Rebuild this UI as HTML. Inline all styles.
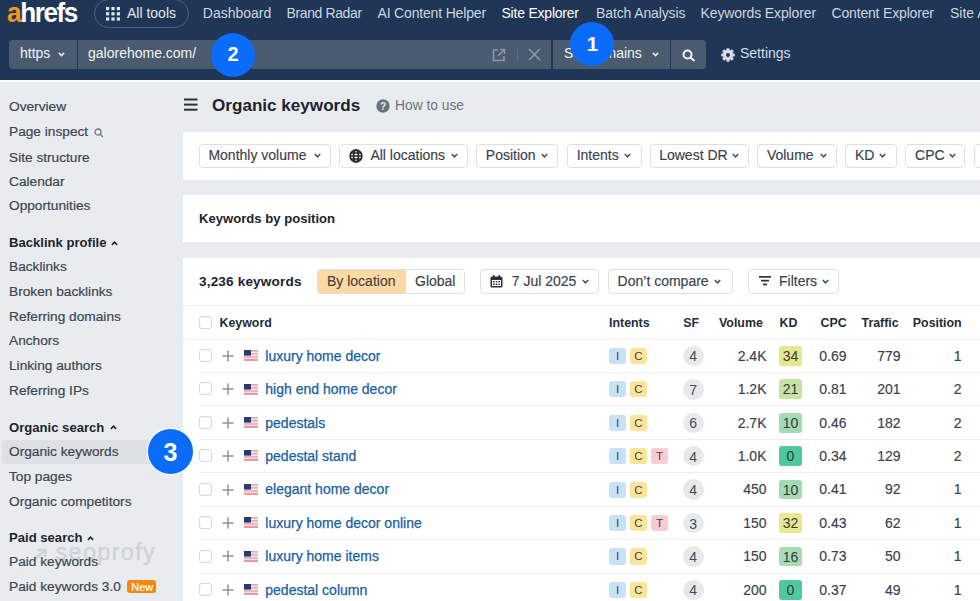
<!DOCTYPE html>
<html><head><meta charset="utf-8">
<style>
*{margin:0;padding:0;box-sizing:border-box}
html,body{width:980px;height:601px;overflow:hidden;background:#e9ecef;font-family:"Liberation Sans",sans-serif;position:relative}
.a{position:absolute;line-height:1;white-space:nowrap}
#hdr{position:absolute;left:-10px;top:-10px;width:1000px;height:90px;background:#1f3657}
#hline{position:absolute;left:-10px;top:80px;width:1000px;height:2px;background:#fbfcfd}
.nav{font-size:14px;color:#cdd5df;top:6px}
.inp{position:absolute;background:#4a5a6f}
.sb{font-size:13.7px;color:#3d4550;left:9px;margin-top:0.8px;-webkit-text-stroke:0.2px #3d4550}
.sbh{font-size:13.1px;color:#1e242b;font-weight:bold;left:9px;margin-top:0.6px}
.panel{position:absolute;background:#fff;left:183px;width:817px}
.btn{position:absolute;border:1px solid #dcdfe4;border-radius:4px;background:#fff;height:24px}
.bt{font-size:14px;color:#3a414b;-webkit-text-stroke:0.15px #3a414b}
.chev{position:absolute;width:5px;height:5px;border-right:1.5px solid #444b55;border-bottom:1.5px solid #444b55;transform:rotate(45deg)}
.th{font-size:12.4px;font-weight:bold;color:#262c35;top:316px;margin-top:0.6px}
.circ{position:absolute;border-radius:50%;background:#0b6cf9;color:#fff;font-weight:bold;text-align:center}
.cv{position:absolute}
.pl{position:absolute}
.cb{position:absolute;width:13px;height:13px;border:1px solid #d3d7dc;border-radius:3px;background:#fff}
.kw{font-size:14px;color:#17609f;-webkit-text-stroke:0.25px #17609f}
.num{font-size:14px;color:#3a414b;-webkit-text-stroke:0.15px #3a414b}
.bd{position:absolute;width:17px;height:16.3px;border-radius:3px;font-size:11.5px;line-height:16.3px;text-align:center;color:#3c434d}
.sf{position:absolute;width:21px;height:20.5px;border-radius:50%;background:#e8e9eb;font-size:14px;line-height:20.5px;padding-top:0.8px;text-align:center;color:#454b53}
.kd{position:absolute;width:23px;height:19.7px;border-radius:3px;font-size:14px;line-height:19.7px;padding-top:1px;text-align:center;color:#333a40}
#wrap{position:absolute;left:0;top:0;width:980px;height:601px}
</style></head><body><div id="wrap">
<div id="hdr"></div>
<div id="hline"></div>

<!-- logo -->
<div class="a" style="left:7px;top:0px;font-size:27px;font-weight:bold;color:#fff;letter-spacing:-1.5px;transform:scaleX(0.97);transform-origin:0 0"><span style="color:#f7941d">a</span>hrefs</div>

<!-- all tools pill -->
<div style="position:absolute;left:93.6px;top:-1px;width:95.6px;height:28.5px;border:1.6px solid #4f6482;border-radius:14.5px"></div>
<svg style="position:absolute;left:106px;top:6.6px" width="14" height="14" viewBox="0 0 14 14" fill="#dfe5ec">
<rect x="0" y="0" width="3.2" height="3.2"/><rect x="5.4" y="0" width="3.2" height="3.2"/><rect x="10.8" y="0" width="3.2" height="3.2"/>
<rect x="0" y="5.2" width="3.2" height="3.2"/><rect x="5.4" y="5.2" width="3.2" height="3.2"/><rect x="10.8" y="5.2" width="3.2" height="3.2"/>
<rect x="0" y="10.4" width="3.2" height="3.2"/><rect x="5.4" y="10.4" width="3.2" height="3.2"/><rect x="10.8" y="10.4" width="3.2" height="3.2"/>
</svg>
<div class="a nav" style="left:127px;color:#e3e8ee">All tools</div>

<div class="a nav" style="left:202.8px">Dashboard</div>
<div class="a nav" style="left:286.5px;letter-spacing:-0.38px">Brand Radar</div>
<div class="a nav" style="left:377.5px;letter-spacing:-0.17px">AI Content Helper</div>
<div class="a nav" style="left:501.5px;color:#fff;letter-spacing:-0.22px">Site Explorer</div>
<div class="a nav" style="left:596px;letter-spacing:-0.12px">Batch Analysis</div>
<div class="a nav" style="left:700.5px;letter-spacing:-0.12px">Keywords Explorer</div>
<div class="a nav" style="left:831.5px;letter-spacing:-0.17px">Content Explorer</div>
<div class="a nav" style="left:950px">Site Audit</div>

<!-- input row -->
<div class="inp" style="left:9px;top:40px;width:68px;height:29px;border-radius:4px 0 0 4px"></div>
<div class="inp" style="left:78px;top:40px;width:473px;height:29px"></div>
<div class="inp" style="left:553px;top:40px;width:117px;height:29px"></div>
<div class="inp" style="left:671px;top:40px;width:35px;height:29px;border-radius:0 4px 4px 0"></div>
<div class="a" style="left:20px;top:46px;font-size:14px;color:#f2f4f7">https</div>
<svg class="cv" style="left:57.8px;top:52px" width="7" height="5" viewBox="0 0 7 5"><path d="M0.9 0.9L3.5 3.6L6.1 0.9" fill="none" stroke="#e3e8ee" stroke-width="1.6"/></svg>
<div class="a" style="left:88px;top:46px;font-size:14px;color:#f2f4f7">galorehome.com/</div>
<svg style="position:absolute;left:492px;top:48px" width="14" height="14" viewBox="0 0 14 14" fill="none" stroke="#8a98aa" stroke-width="1.6">
<path d="M6 2H1.5v10.5H12V8"/><path d="M8 1.5h4.5V6M12.5 1.5L6 8"/></svg>
<div style="position:absolute;left:516.5px;top:49px;width:1px;height:12px;background:#5e6d81"></div>
<svg style="position:absolute;left:528px;top:48px" width="13" height="13" viewBox="0 0 13 13" stroke="#8a98aa" stroke-width="1.6"><path d="M1 1L12 12M12 1L1 12"/></svg>
<div class="a" style="left:564px;top:46px;font-size:14px;color:#f2f4f7">Subdomains</div>
<svg class="cv" style="left:651.5px;top:52.2px" width="7" height="5" viewBox="0 0 7 5"><path d="M0.9 0.9L3.5 3.6L6.1 0.9" fill="none" stroke="#e3e8ee" stroke-width="1.6"/></svg>
<svg style="position:absolute;left:682px;top:49px" width="14" height="13" viewBox="0 0 14 13" fill="none" stroke="#f2f4f7" stroke-width="2"><circle cx="5.5" cy="5.5" r="4"/><path d="M8.5 8.5L12.5 12"/></svg>
<svg style="position:absolute;left:720.5px;top:47.8px" width="14" height="14" viewBox="0 0 14 14"><g fill="#d6dde6"><circle cx="7" cy="7" r="4.9"/><rect x="5.4" y="0.2" width="3.2" height="13.6" rx="0.8"/><rect x="5.4" y="0.2" width="3.2" height="13.6" rx="0.8" transform="rotate(45 7 7)"/><rect x="5.4" y="0.2" width="3.2" height="13.6" rx="0.8" transform="rotate(90 7 7)"/><rect x="5.4" y="0.2" width="3.2" height="13.6" rx="0.8" transform="rotate(135 7 7)"/></g><circle cx="7" cy="7" r="2" fill="#1f3657"/></svg>
<div class="a" style="left:740px;top:46px;font-size:14px;color:#d6dde6">Settings</div>

<!-- SIDEBAR -->
<div style="position:absolute;left:1.5px;top:440px;width:176px;height:24px;background:#dde1e6;border-radius:4px"></div>
<div class="a sb" style="top:99.7px">Overview</div>
<div class="a sb" style="top:124.7px">Page inspect</div>
<svg style="position:absolute;left:94px;top:128px" width="10" height="10" viewBox="0 0 10 10" fill="none" stroke="#6f7782" stroke-width="1.3"><circle cx="4" cy="4" r="3"/><path d="M6.2 6.2L9 9"/></svg>
<div class="a sb" style="top:150px">Site structure</div>
<div class="a sb" style="top:173.9px">Calendar</div>
<div class="a sb" style="top:198.4px">Opportunities</div>
<div class="a sbh" style="top:235.4px">Backlink profile</div>
<svg class="cv" style="left:111px;top:240.5px" width="7" height="5" viewBox="0 0 7 5"><path d="M0.9 3.9L3.5 1.2L6.1 3.9" fill="none" stroke="#1e242b" stroke-width="1.6"/></svg>
<div class="a sb" style="top:259.7px">Backlinks</div>
<div class="a sb" style="top:284.5px">Broken backlinks</div>
<div class="a sb" style="top:309.7px">Referring domains</div>
<div class="a sb" style="top:333.7px">Anchors</div>
<div class="a sb" style="top:357.9px">Linking authors</div>
<div class="a sb" style="top:383.2px">Referring IPs</div>
<div class="a sbh" style="top:420px">Organic search</div>
<svg class="cv" style="left:109.8px;top:425.2px" width="7" height="5" viewBox="0 0 7 5"><path d="M0.9 3.9L3.5 1.2L6.1 3.9" fill="none" stroke="#1e242b" stroke-width="1.6"/></svg>
<div class="a sb" style="top:444.4px">Organic keywords</div>
<div class="a sb" style="top:469.4px">Top pages</div>
<div class="a sb" style="top:493.8px">Organic competitors</div>
<div class="a sbh" style="top:530.4px">Paid search</div>
<svg class="cv" style="left:87.3px;top:535.5px" width="7" height="5" viewBox="0 0 7 5"><path d="M0.9 3.9L3.5 1.2L6.1 3.9" fill="none" stroke="#1e242b" stroke-width="1.6"/></svg>
<svg style="position:absolute;left:33px;top:548px" width="15" height="12" viewBox="0 0 15 12" fill="none" stroke="rgba(150,156,166,0.3)" stroke-width="2.8"><path d="M1.5 11L11 3.5M4 2.2h8.3V9"/></svg><div class="a" style="left:55.5px;top:541.2px;font-size:23.5px;letter-spacing:1.3px;color:rgba(150,156,166,0.26);-webkit-text-stroke:0.7px rgba(150,156,166,0.26)">seoprofy</div>
<div class="a sb" style="top:554.4px">Paid keywords</div>
<div class="a sb" style="top:578.9px">Paid keywords 3.0</div>
<div style="position:absolute;left:127px;top:580px;width:29px;height:13.4px;background:#f5870f;border-radius:3px"></div>
<div class="a" style="left:131.3px;top:581.6px;font-size:11px;color:#fff;-webkit-text-stroke:0.2px #fff">New</div>

<!-- MAIN -->
<svg style="position:absolute;left:183.5px;top:98px" width="14" height="13" viewBox="0 0 14 13" fill="#2b313a"><rect x="0" y="0.5" width="13.5" height="2"/><rect x="0" y="5.6" width="13.5" height="2"/><rect x="0" y="10.7" width="13.5" height="2"/></svg>
<div class="a" style="left:212px;top:97.1px;font-size:17.1px;font-weight:bold;color:#1e242b">Organic keywords</div>
<svg style="position:absolute;left:375.5px;top:98.5px" width="14" height="14" viewBox="0 0 14 14"><circle cx="7" cy="7" r="6.7" fill="#6a727d"/><text x="7" y="10.6" font-family="Liberation Sans" font-weight="bold" font-size="10" fill="#e9ecef" text-anchor="middle">?</text></svg>
<div class="a" style="left:395px;top:98.7px;font-size:13.8px;color:#6b737e">How to use</div>

<!-- panel 1 -->
<div class="panel" style="top:132px;height:48px"></div>
<!-- filter buttons -->
<div class="btn" style="left:199px;top:144px;width:132.0px;height:24px"></div>
<div class="a bt" style="left:208.4px;top:147.9px">Monthly volume</div>
<svg class="cv" style="left:314.4px;top:153.4px" width="7" height="5" viewBox="0 0 7 5"><path d="M0.8 0.9L3.5 3.8L6.2 0.9" fill="none" stroke="#474e58" stroke-width="1.5"/></svg>
<div class="btn" style="left:339.4px;top:144px;width:128.6px;height:24px"></div>
<div class="a bt" style="left:370.4px;top:147.9px">All locations</div>
<svg class="cv" style="left:450.7px;top:153.4px" width="7" height="5" viewBox="0 0 7 5"><path d="M0.8 0.9L3.5 3.8L6.2 0.9" fill="none" stroke="#474e58" stroke-width="1.5"/></svg>
<div class="btn" style="left:475.8px;top:144px;width:82.5px;height:24px"></div>
<div class="a bt" style="left:485.8px;top:147.9px">Position</div>
<svg class="cv" style="left:541.1px;top:153.4px" width="7" height="5" viewBox="0 0 7 5"><path d="M0.8 0.9L3.5 3.8L6.2 0.9" fill="none" stroke="#474e58" stroke-width="1.5"/></svg>
<div class="btn" style="left:566.7px;top:144px;width:75.3px;height:24px"></div>
<div class="a bt" style="left:576.7px;top:147.9px">Intents</div>
<svg class="cv" style="left:624.3px;top:153.4px" width="7" height="5" viewBox="0 0 7 5"><path d="M0.8 0.9L3.5 3.8L6.2 0.9" fill="none" stroke="#474e58" stroke-width="1.5"/></svg>
<div class="btn" style="left:649.7px;top:144px;width:99.6px;height:24px"></div>
<div class="a bt" style="left:659.2px;top:147.9px">Lowest DR</div>
<svg class="cv" style="left:731.7px;top:153.4px" width="7" height="5" viewBox="0 0 7 5"><path d="M0.8 0.9L3.5 3.8L6.2 0.9" fill="none" stroke="#474e58" stroke-width="1.5"/></svg>
<div class="btn" style="left:757.3px;top:144px;width:79.7px;height:24px"></div>
<div class="a bt" style="left:766.9px;top:147.9px">Volume</div>
<svg class="cv" style="left:819.7px;top:153.4px" width="7" height="5" viewBox="0 0 7 5"><path d="M0.8 0.9L3.5 3.8L6.2 0.9" fill="none" stroke="#474e58" stroke-width="1.5"/></svg>
<div class="btn" style="left:845.4px;top:144px;width:51.4px;height:24px"></div>
<div class="a bt" style="left:855.0px;top:147.9px">KD</div>
<svg class="cv" style="left:879.1px;top:153.4px" width="7" height="5" viewBox="0 0 7 5"><path d="M0.8 0.9L3.5 3.8L6.2 0.9" fill="none" stroke="#474e58" stroke-width="1.5"/></svg>
<div class="btn" style="left:905.4px;top:144px;width:60.1px;height:24px"></div>
<div class="a bt" style="left:915.1px;top:147.9px">CPC</div>
<svg class="cv" style="left:948.5px;top:153.4px" width="7" height="5" viewBox="0 0 7 5"><path d="M0.8 0.9L3.5 3.8L6.2 0.9" fill="none" stroke="#474e58" stroke-width="1.5"/></svg>
<div class="btn" style="left:973.8px;top:144px;width:86.2px;height:24px"></div>
<div class="a bt" style="left:984.2px;top:147.9px">Traffic</div>
<svg class="cv" style="left:1039.7px;top:153.4px" width="7" height="5" viewBox="0 0 7 5"><path d="M0.8 0.9L3.5 3.8L6.2 0.9" fill="none" stroke="#474e58" stroke-width="1.5"/></svg>
<svg style="position:absolute;left:349px;top:149.3px" width="14" height="14" viewBox="0 0 14 14" fill="none" stroke="#23282f" stroke-width="1.7"><circle cx="7" cy="7" r="5.9"/><ellipse cx="7" cy="7" rx="2.4" ry="5.9"/><path d="M1.2 7h11.6M1.8 4h10.4M1.8 10h10.4"/></svg>
<div class="panel" style="top:195.4px;height:47px"></div>
<div class="a" style="left:199px;top:211.8px;font-size:13.1px;font-weight:bold;color:#1e242b">Keywords by position</div>
<div class="panel" style="top:258px;height:343px"></div>
<div class="a" style="left:199px;top:274.5px;font-size:13.6px;font-weight:bold;color:#1e242b;letter-spacing:0.15px">3,236 keywords</div>
<div class="btn" style="left:317px;top:268.8px;width:147.7px;height:25px;overflow:hidden"><div style="position:absolute;left:0;top:0;width:88px;height:23px;background:#fdd9a6"></div></div>
<div class="a bt" style="left:327px;top:274.2px;color:#4a4136;-webkit-text-stroke:0.15px #4a4136">By location</div>
<div class="a bt" style="left:415px;top:274.2px">Global</div>
<div class="btn" style="left:480px;top:268.8px;width:119.3px;height:25px"></div>
<svg style="position:absolute;left:490px;top:274.5px" width="13" height="13" viewBox="0 0 13 13"><rect x="0.5" y="1.5" width="12" height="11" rx="1.5" fill="#2b313a"/><rect x="2" y="5" width="9" height="6" fill="#fff"/><g fill="#2b313a"><rect x="3" y="6" width="1.6" height="1.4"/><rect x="5.7" y="6" width="1.6" height="1.4"/><rect x="8.4" y="6" width="1.6" height="1.4"/><rect x="3" y="8.6" width="1.6" height="1.4"/><rect x="5.7" y="8.6" width="1.6" height="1.4"/><rect x="8.4" y="8.6" width="1.6" height="1.4"/></g><rect x="3" y="0" width="1.5" height="3" fill="#2b313a"/><rect x="8.5" y="0" width="1.5" height="3" fill="#2b313a"/></svg>
<div class="a bt" style="left:511.8px;top:274.2px">7 Jul 2025</div>
<svg class="cv" style="left:582.3px;top:278.5px" width="7" height="5" viewBox="0 0 7 5"><path d="M0.8 0.9L3.5 3.8L6.2 0.9" fill="none" stroke="#474e58" stroke-width="1.5"/></svg>
<div class="btn" style="left:608px;top:268.8px;width:124.6px;height:25px"></div>
<div class="a bt" style="left:617.6px;top:274.2px">Don’t compare</div>
<svg class="cv" style="left:714.4px;top:278.5px" width="7" height="5" viewBox="0 0 7 5"><path d="M0.8 0.9L3.5 3.8L6.2 0.9" fill="none" stroke="#474e58" stroke-width="1.5"/></svg>
<div class="btn" style="left:747.8px;top:268.8px;width:91.5px;height:25px"></div>
<svg style="position:absolute;left:758.5px;top:275px" width="12" height="11" viewBox="0 0 12 11" fill="#2b313a"><rect x="0" y="1" width="12" height="1.7"/><rect x="2" y="4.8" width="8" height="1.7"/><rect x="4" y="8.6" width="4" height="1.7"/></svg>
<div class="a bt" style="left:779px;top:274.2px">Filters</div>
<svg class="cv" style="left:822.0px;top:278.5px" width="7" height="5" viewBox="0 0 7 5"><path d="M0.8 0.9L3.5 3.8L6.2 0.9" fill="none" stroke="#474e58" stroke-width="1.5"/></svg>
<div style="position:absolute;left:183px;top:305px;width:817px;height:1px;background:#eceef1"></div>
<div class="cb" style="left:199px;top:316px"></div>
<div class="a th" style="left:219.5px;top:316.2px">Keyword</div>
<div class="a th" style="left:609.0px;top:316.2px">Intents</div>
<div class="a th" style="left:683.3px;top:316.2px">SF</div>
<div class="a th" style="left:719.0px;top:316.2px">Volume</div>
<div class="a th" style="left:779.6px;top:316.2px">KD</div>
<div class="a th" style="left:820.5px;top:316.2px">CPC</div>
<div class="a th" style="left:861.5px;top:316.2px">Traffic</div>
<div class="a th" style="left:912.8px;top:316.2px">Position</div>
<div style="position:absolute;left:183px;top:339px;width:817px;height:1px;background:#eceef1"></div>
<div class="cb" style="left:199px;top:348.9px"></div>
<svg class="pl" style="left:222px;top:349.8px" width="12" height="12" viewBox="0 0 12 12"><path d="M6 0.5v11M0.5 6h11" stroke="#8c9299" stroke-width="1.5"/></svg>
<svg class="pl" style="left:244px;top:350.1px" width="14" height="11" viewBox="0 0 14 11"><rect width="14" height="11" fill="#f7eef0"/><rect y="0" width="14" height="1.6" fill="#eda3ac"/><rect y="3.1" width="14" height="1.5" fill="#eda3ac"/><rect y="6.2" width="14" height="1.5" fill="#eda3ac"/><rect y="8.8" width="14" height="2.2" fill="#eb9aa4"/><rect width="7" height="5.6" fill="#283d6e"/></svg>
<div class="a kw" style="left:265.3px;top:348.6px">luxury home decor</div>
<div class="bd" style="left:609px;top:347.8px;background:#c8e1f6">I</div>
<div class="bd" style="left:630px;top:347.8px;background:#fce59b">C</div>
<div class="sf" style="left:682.7px;top:345.6px">4</div>
<div class="a num" style="right:213.5px;top:348.6px">2.4K</div>
<div class="kd" style="left:779px;top:346.0px;background:#e6e78f">34</div>
<div class="a num" style="right:133.5px;top:348.6px">0.69</div>
<div class="a num" style="right:79.5px;top:348.6px">779</div>
<div class="a num" style="right:18.5px;top:348.6px">1</div>
<div style="position:absolute;left:199px;top:371.9px;width:801px;height:1px;background:#eceef1"></div>
<div class="cb" style="left:199px;top:382.3px"></div>
<svg class="pl" style="left:222px;top:383.2px" width="12" height="12" viewBox="0 0 12 12"><path d="M6 0.5v11M0.5 6h11" stroke="#8c9299" stroke-width="1.5"/></svg>
<svg class="pl" style="left:244px;top:383.5px" width="14" height="11" viewBox="0 0 14 11"><rect width="14" height="11" fill="#f7eef0"/><rect y="0" width="14" height="1.6" fill="#eda3ac"/><rect y="3.1" width="14" height="1.5" fill="#eda3ac"/><rect y="6.2" width="14" height="1.5" fill="#eda3ac"/><rect y="8.8" width="14" height="2.2" fill="#eb9aa4"/><rect width="7" height="5.6" fill="#283d6e"/></svg>
<div class="a kw" style="left:265.3px;top:382.1px">high end home decor</div>
<div class="bd" style="left:609px;top:381.2px;background:#c8e1f6">I</div>
<div class="bd" style="left:630px;top:381.2px;background:#fce59b">C</div>
<div class="sf" style="left:682.7px;top:379.0px">7</div>
<div class="a num" style="right:213.5px;top:382.1px">1.2K</div>
<div class="kd" style="left:779px;top:379.4px;background:#c5e3a3">21</div>
<div class="a num" style="right:133.5px;top:382.1px">0.81</div>
<div class="a num" style="right:79.5px;top:382.1px">201</div>
<div class="a num" style="right:18.5px;top:382.1px">2</div>
<div style="position:absolute;left:199px;top:405.3px;width:801px;height:1px;background:#eceef1"></div>
<div class="cb" style="left:199px;top:415.8px"></div>
<svg class="pl" style="left:222px;top:416.7px" width="12" height="12" viewBox="0 0 12 12"><path d="M6 0.5v11M0.5 6h11" stroke="#8c9299" stroke-width="1.5"/></svg>
<svg class="pl" style="left:244px;top:417.0px" width="14" height="11" viewBox="0 0 14 11"><rect width="14" height="11" fill="#f7eef0"/><rect y="0" width="14" height="1.6" fill="#eda3ac"/><rect y="3.1" width="14" height="1.5" fill="#eda3ac"/><rect y="6.2" width="14" height="1.5" fill="#eda3ac"/><rect y="8.8" width="14" height="2.2" fill="#eb9aa4"/><rect width="7" height="5.6" fill="#283d6e"/></svg>
<div class="a kw" style="left:265.3px;top:415.5px">pedestals</div>
<div class="bd" style="left:609px;top:414.7px;background:#c8e1f6">I</div>
<div class="bd" style="left:630px;top:414.7px;background:#fce59b">C</div>
<div class="sf" style="left:682.7px;top:412.5px">6</div>
<div class="a num" style="right:213.5px;top:415.5px">2.7K</div>
<div class="kd" style="left:779px;top:412.9px;background:#a4dcb2">10</div>
<div class="a num" style="right:133.5px;top:415.5px">0.46</div>
<div class="a num" style="right:79.5px;top:415.5px">182</div>
<div class="a num" style="right:18.5px;top:415.5px">2</div>
<div style="position:absolute;left:199px;top:438.8px;width:801px;height:1px;background:#eceef1"></div>
<div class="cb" style="left:199px;top:449.2px"></div>
<svg class="pl" style="left:222px;top:450.1px" width="12" height="12" viewBox="0 0 12 12"><path d="M6 0.5v11M0.5 6h11" stroke="#8c9299" stroke-width="1.5"/></svg>
<svg class="pl" style="left:244px;top:450.4px" width="14" height="11" viewBox="0 0 14 11"><rect width="14" height="11" fill="#f7eef0"/><rect y="0" width="14" height="1.6" fill="#eda3ac"/><rect y="3.1" width="14" height="1.5" fill="#eda3ac"/><rect y="6.2" width="14" height="1.5" fill="#eda3ac"/><rect y="8.8" width="14" height="2.2" fill="#eb9aa4"/><rect width="7" height="5.6" fill="#283d6e"/></svg>
<div class="a kw" style="left:265.3px;top:448.9px">pedestal stand</div>
<div class="bd" style="left:609px;top:448.1px;background:#c8e1f6">I</div>
<div class="bd" style="left:630px;top:448.1px;background:#fce59b">C</div>
<div class="bd" style="left:651px;top:448.1px;background:#f9ccd3">T</div>
<div class="sf" style="left:682.7px;top:445.9px">4</div>
<div class="a num" style="right:213.5px;top:448.9px">1.0K</div>
<div class="kd" style="left:779px;top:446.3px;background:#4ec89c">0</div>
<div class="a num" style="right:133.5px;top:448.9px">0.34</div>
<div class="a num" style="right:79.5px;top:448.9px">129</div>
<div class="a num" style="right:18.5px;top:448.9px">2</div>
<div style="position:absolute;left:199px;top:472.2px;width:801px;height:1px;background:#eceef1"></div>
<div class="cb" style="left:199px;top:482.6px"></div>
<svg class="pl" style="left:222px;top:483.5px" width="12" height="12" viewBox="0 0 12 12"><path d="M6 0.5v11M0.5 6h11" stroke="#8c9299" stroke-width="1.5"/></svg>
<svg class="pl" style="left:244px;top:483.8px" width="14" height="11" viewBox="0 0 14 11"><rect width="14" height="11" fill="#f7eef0"/><rect y="0" width="14" height="1.6" fill="#eda3ac"/><rect y="3.1" width="14" height="1.5" fill="#eda3ac"/><rect y="6.2" width="14" height="1.5" fill="#eda3ac"/><rect y="8.8" width="14" height="2.2" fill="#eb9aa4"/><rect width="7" height="5.6" fill="#283d6e"/></svg>
<div class="a kw" style="left:265.3px;top:482.4px">elegant home decor</div>
<div class="bd" style="left:609px;top:481.5px;background:#c8e1f6">I</div>
<div class="bd" style="left:630px;top:481.5px;background:#fce59b">C</div>
<div class="sf" style="left:682.7px;top:479.3px">4</div>
<div class="a num" style="right:213.5px;top:482.4px">450</div>
<div class="kd" style="left:779px;top:479.7px;background:#a4dcb2">10</div>
<div class="a num" style="right:133.5px;top:482.4px">0.41</div>
<div class="a num" style="right:79.5px;top:482.4px">92</div>
<div class="a num" style="right:18.5px;top:482.4px">1</div>
<div style="position:absolute;left:199px;top:505.6px;width:801px;height:1px;background:#eceef1"></div>
<div class="cb" style="left:199px;top:516.1px"></div>
<svg class="pl" style="left:222px;top:517.0px" width="12" height="12" viewBox="0 0 12 12"><path d="M6 0.5v11M0.5 6h11" stroke="#8c9299" stroke-width="1.5"/></svg>
<svg class="pl" style="left:244px;top:517.2px" width="14" height="11" viewBox="0 0 14 11"><rect width="14" height="11" fill="#f7eef0"/><rect y="0" width="14" height="1.6" fill="#eda3ac"/><rect y="3.1" width="14" height="1.5" fill="#eda3ac"/><rect y="6.2" width="14" height="1.5" fill="#eda3ac"/><rect y="8.8" width="14" height="2.2" fill="#eb9aa4"/><rect width="7" height="5.6" fill="#283d6e"/></svg>
<div class="a kw" style="left:265.3px;top:515.8px">luxury home decor online</div>
<div class="bd" style="left:609px;top:515.0px;background:#c8e1f6">I</div>
<div class="bd" style="left:630px;top:515.0px;background:#fce59b">C</div>
<div class="bd" style="left:651px;top:515.0px;background:#f9ccd3">T</div>
<div class="sf" style="left:682.7px;top:512.8px">3</div>
<div class="a num" style="right:213.5px;top:515.8px">150</div>
<div class="kd" style="left:779px;top:513.2px;background:#e9e891">32</div>
<div class="a num" style="right:133.5px;top:515.8px">0.43</div>
<div class="a num" style="right:79.5px;top:515.8px">62</div>
<div class="a num" style="right:18.5px;top:515.8px">1</div>
<div style="position:absolute;left:199px;top:539.1px;width:801px;height:1px;background:#eceef1"></div>
<div class="cb" style="left:199px;top:549.5px"></div>
<svg class="pl" style="left:222px;top:550.4px" width="12" height="12" viewBox="0 0 12 12"><path d="M6 0.5v11M0.5 6h11" stroke="#8c9299" stroke-width="1.5"/></svg>
<svg class="pl" style="left:244px;top:550.7px" width="14" height="11" viewBox="0 0 14 11"><rect width="14" height="11" fill="#f7eef0"/><rect y="0" width="14" height="1.6" fill="#eda3ac"/><rect y="3.1" width="14" height="1.5" fill="#eda3ac"/><rect y="6.2" width="14" height="1.5" fill="#eda3ac"/><rect y="8.8" width="14" height="2.2" fill="#eb9aa4"/><rect width="7" height="5.6" fill="#283d6e"/></svg>
<div class="a kw" style="left:265.3px;top:549.2px">luxury home items</div>
<div class="bd" style="left:609px;top:548.4px;background:#c8e1f6">I</div>
<div class="bd" style="left:630px;top:548.4px;background:#fce59b">C</div>
<div class="sf" style="left:682.7px;top:546.2px">4</div>
<div class="a num" style="right:213.5px;top:549.2px">150</div>
<div class="kd" style="left:779px;top:546.6px;background:#a6dcb2">16</div>
<div class="a num" style="right:133.5px;top:549.2px">0.73</div>
<div class="a num" style="right:79.5px;top:549.2px">50</div>
<div class="a num" style="right:18.5px;top:549.2px">1</div>
<div style="position:absolute;left:199px;top:572.5px;width:801px;height:1px;background:#eceef1"></div>
<div class="cb" style="left:199px;top:582.9px"></div>
<svg class="pl" style="left:222px;top:583.8px" width="12" height="12" viewBox="0 0 12 12"><path d="M6 0.5v11M0.5 6h11" stroke="#8c9299" stroke-width="1.5"/></svg>
<svg class="pl" style="left:244px;top:584.1px" width="14" height="11" viewBox="0 0 14 11"><rect width="14" height="11" fill="#f7eef0"/><rect y="0" width="14" height="1.6" fill="#eda3ac"/><rect y="3.1" width="14" height="1.5" fill="#eda3ac"/><rect y="6.2" width="14" height="1.5" fill="#eda3ac"/><rect y="8.8" width="14" height="2.2" fill="#eb9aa4"/><rect width="7" height="5.6" fill="#283d6e"/></svg>
<div class="a kw" style="left:265.3px;top:582.7px">pedestal column</div>
<div class="bd" style="left:609px;top:581.8px;background:#c8e1f6">I</div>
<div class="bd" style="left:630px;top:581.8px;background:#fce59b">C</div>
<div class="sf" style="left:682.7px;top:579.6px">4</div>
<div class="a num" style="right:213.5px;top:582.7px">200</div>
<div class="kd" style="left:779px;top:580.0px;background:#4ec89c">0</div>
<div class="a num" style="right:133.5px;top:582.7px">0.37</div>
<div class="a num" style="right:79.5px;top:582.7px">49</div>
<div class="a num" style="right:18.5px;top:582.7px">1</div>
<div style="position:absolute;left:199px;top:605.9px;width:801px;height:1px;background:#eceef1"></div>
<div class="circ" style="left:570px;top:22px;width:44px;height:44px"><div class="a" style="left:0.5px;width:44px;top:12.2px;font-size:20.5px">1</div></div>
<div class="circ" style="left:211px;top:32.5px;width:44px;height:44px"><div class="a" style="left:0;width:44px;top:11.4px;font-size:20px">2</div></div>
<div class="circ" style="left:148.3px;top:429px;width:44.5px;height:44.5px;box-shadow:0 0 0 1px rgba(255,255,255,0.9)"><div class="a" style="left:0;width:44.5px;top:10.6px;font-size:25px;font-weight:bold">3</div></div>
</div></body></html>
